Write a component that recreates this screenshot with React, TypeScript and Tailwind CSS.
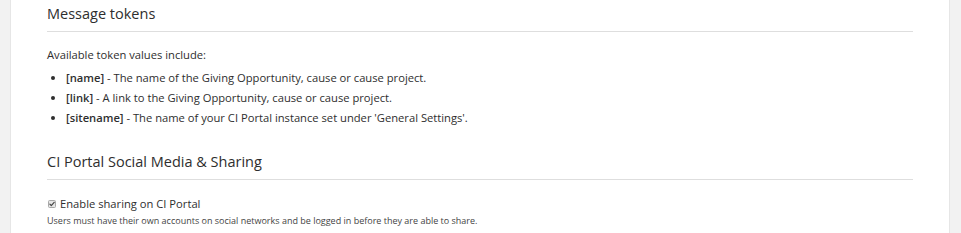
const font = { fontFamily: '"Open Sans", "Noto Sans", sans-serif' }

const tokens: { token: string; text: string }[] = [
  { token: '[name]', text: ' - The name of the Giving Opportunity, cause or cause project.' },
  { token: '[link]', text: ' - A link to the Giving Opportunity, cause or cause project.' },
  {
    token: '[sitename]',
    text: " - The name of your CI Portal instance set under 'General Settings'.",
  },
]

function CheckedBox() {
  return (
    <span className="flex h-[8px] w-[8px] shrink-0 items-center justify-center rounded-[1.5px] border border-[#a8a8a8] bg-[#e6e6e6]">
      <svg viewBox="0 0 10 10" className="h-[6px] w-[6px]" aria-hidden>
        <path d="M1.5 5.2l2.3 2.4L8.6 2.2" fill="none" stroke="#444" strokeWidth={2} strokeLinecap="round" strokeLinejoin="round" />
      </svg>
    </span>
  )
}

function SectionHeading({ children, className = '' }: { children: string; className?: string }) {
  return (
    <h2
      className={`border-b border-[#dedede] pb-[5px] pt-[2px] text-[14.5px] font-normal leading-[24px] text-[#2e2e2e] ${className}`}
    >
      {children}
    </h2>
  )
}

export default function App() {
  return (
    <div className="flex h-[233px] overflow-hidden bg-[#f2f2f2]" style={font}>
      <div className="w-[11px] shrink-0 border-r border-[#e6e6e6]" />
      <div className="flex-1 bg-white px-[36px] text-[#2e2e2e]">
        <SectionHeading>Message tokens</SectionHeading>

        <p className="mt-[13px] text-[11.2px] leading-[20px]">Available token values include:</p>
        <ul className="mt-[3px] list-disc pl-[19px] text-[11.2px] leading-[20px]">
          {tokens.map(({ token, text }) => (
            <li key={token}>
              <span className="font-semibold">{token}</span>
              {text}
            </li>
          ))}
        </ul>

        <SectionHeading className="mt-[20px]">CI Portal Social Media &amp; Sharing</SectionHeading>

        <label className="mt-[14px] flex items-center gap-[4px] pl-[1px] text-[11.2px] leading-[20px]">
          <CheckedBox />
          Enable sharing on CI Portal
        </label>
        <p className="text-[9px] leading-[14px] text-[#444]">
          Users must have their own accounts on social networks and be logged in before they are able to share.
        </p>
      </div>
      <div className="w-[12px] shrink-0 border-l border-[#e6e6e6]" />
    </div>
  )
}
